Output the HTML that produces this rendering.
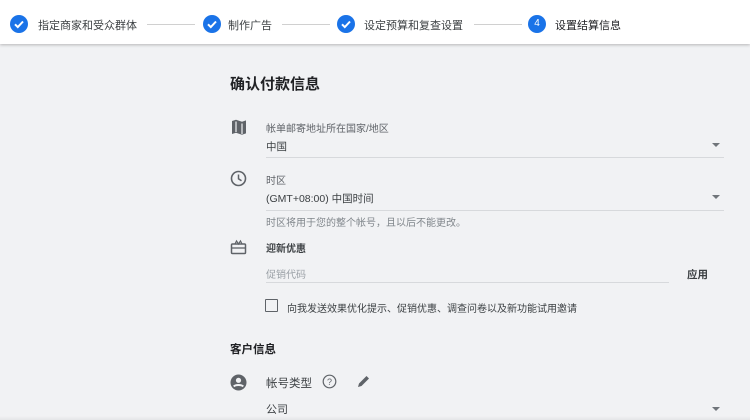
<!DOCTYPE html>
<html><head><meta charset="utf-8"><style>
*{margin:0;padding:0;box-sizing:border-box}
body{width:750px;height:420px;overflow:hidden;background:#f1f2f4;font-family:"Liberation Sans","Noto Sans CJK SC",sans-serif;color:#3c4043;position:relative}
.hdr{position:absolute;left:0;top:0;width:750px;height:44px;background:#fff;box-shadow:0 1px 3px rgba(0,0,0,.25)}
.a{position:absolute;white-space:nowrap}
.st{font-size:11px;color:#3c4043;top:17px}
.ln{position:absolute;height:1px;background:#d0d0d0;top:24px}
.ck{position:absolute;top:15px;width:18px;height:18px;border-radius:50%;background:#1a73e8}
.lbl{font-size:10px;color:#5f6368}
.val{font-size:10.5px;color:#3c4043}
.ul{position:absolute;height:1px;background:#d7d9dc}
.arr{position:absolute;width:0;height:0;border-left:4px solid transparent;border-right:4px solid transparent;border-top:4px solid #70757a}
</style></head><body>
<div class="hdr">
<div class="ck" style="left:10px"><svg width="18" height="18"><path d="M5 9.3l2.8 2.8 5.2-5.6" stroke="#fff" stroke-width="2" fill="none"/></svg></div>
<div class="a st" style="left:38px">指定商家和受众群体</div>
<div class="ln" style="left:147px;width:48px"></div>
<div class="ck" style="left:203px"><svg width="18" height="18"><path d="M5 9.3l2.8 2.8 5.2-5.6" stroke="#fff" stroke-width="2" fill="none"/></svg></div>
<div class="a st" style="left:228px">制作广告</div>
<div class="ln" style="left:282px;width:48px"></div>
<div class="ck" style="left:337px"><svg width="18" height="18"><path d="M5 9.3l2.8 2.8 5.2-5.6" stroke="#fff" stroke-width="2" fill="none"/></svg></div>
<div class="a st" style="left:364px">设定预算和复查设置</div>
<div class="ln" style="left:474px;width:48px"></div>
<div class="ck" style="left:528px;color:#fff;font-size:10px;text-align:center;line-height:18px">4</div>
<div class="a st" style="left:555px;color:#202124">设置结算信息</div>
</div>

<div class="a" style="left:230px;top:73px;font-size:15px;font-weight:bold;color:#202124">确认付款信息</div>

<svg class="a" style="left:230px;top:119px" width="18" height="16"><path d="M2 2l4-1.3 6 2 4-1.3v13l-4 1.3-6-2-4 1.3z" fill="#5f6368"/><path d="M6 2.5v10.5M12 4.5v10.5" stroke="#f1f2f4" stroke-width="1.2"/></svg>
<div class="a lbl" style="left:266px;top:120px">帐单邮寄地址所在国家/地区</div>
<div class="a val" style="left:266px;top:139px">中国</div>
<div class="arr" style="left:712px;top:143px"></div>
<div class="ul" style="left:266px;top:157px;width:458px"></div>

<svg class="a" style="left:230px;top:170px" width="17" height="17"><circle cx="8.5" cy="8.5" r="7" stroke="#5f6368" stroke-width="1.6" fill="none"/><path d="M8.5 4.5v4.3l3 2" stroke="#5f6368" stroke-width="1.5" fill="none"/></svg>
<div class="a lbl" style="left:266px;top:172px">时区</div>
<div class="a val" style="left:266px;top:191px">(GMT+08:00) 中国时间</div>
<div class="arr" style="left:712px;top:195px"></div>
<div class="ul" style="left:266px;top:210px;width:458px"></div>
<div class="a lbl" style="left:266px;top:214px;color:#80868b">时区将用于您的整个帐号，且以后不能更改。</div>

<svg class="a" style="left:230px;top:239px" width="17" height="16"><rect x="1.5" y="5" width="14" height="9.5" rx="1" stroke="#5f6368" stroke-width="1.5" fill="none"/><path d="M1.5 9h14" stroke="#5f6368" stroke-width="1.3"/><path d="M5 5l1.5-3 2 3 2-3 1.5 3" stroke="#5f6368" stroke-width="1.2" fill="none"/></svg>
<div class="a" style="left:266px;top:240px;font-size:10px;font-weight:bold;color:#3c4043">迎新优惠</div>
<div class="a lbl" style="left:266px;top:266px;color:#9aa0a6">促销代码</div>
<div class="ul" style="left:266px;top:282px;width:403px"></div>
<div class="a" style="left:687px;top:267px;font-size:10.5px;font-weight:bold;color:#3c4043">应用</div>

<div class="a" style="left:265px;top:299px;width:13px;height:13px;border:1.6px solid #5f6368;border-radius:1px"></div>
<div class="a lbl" style="left:287px;top:300px;color:#3c4043">向我发送效果优化提示、促销优惠、调查问卷以及新功能试用邀请</div>

<div class="a" style="left:230px;top:341px;font-size:11.5px;font-weight:bold;color:#202124">客户信息</div>

<svg class="a" style="left:230px;top:374px" width="17" height="17"><circle cx="8.5" cy="8.5" r="8" fill="#5f6368"/><circle cx="8.5" cy="6.3" r="2.6" fill="#f1f2f4"/><path d="M3.8 12.5c1.5-2 7.9-2 9.4 0" stroke="#f1f2f4" stroke-width="2" fill="none"/></svg>
<div class="a" style="left:266px;top:375px;font-size:11.5px;color:#3c4043">帐号类型</div>
<svg class="a" style="left:322px;top:374px" width="15" height="15"><circle cx="7.5" cy="7.5" r="6.3" stroke="#5f6368" stroke-width="1.2" fill="none"/><text x="7.5" y="11" font-size="9" text-anchor="middle" fill="#5f6368" font-family="Liberation Sans">?</text></svg>
<svg class="a" style="left:356px;top:374px" width="15" height="15"><path d="M2 13l1-3.5 7.5-7.5 2.5 2.5-7.5 7.5z" fill="#5f6368"/></svg>
<div class="a val" style="left:266px;top:401px;font-size:11px">公司</div>
<div class="arr" style="left:712px;top:407px"></div>
<div class="a" style="left:0;top:416px;width:750px;height:4px;background:linear-gradient(rgba(230,231,233,0),#e4e5e7)"></div>
</body></html>
